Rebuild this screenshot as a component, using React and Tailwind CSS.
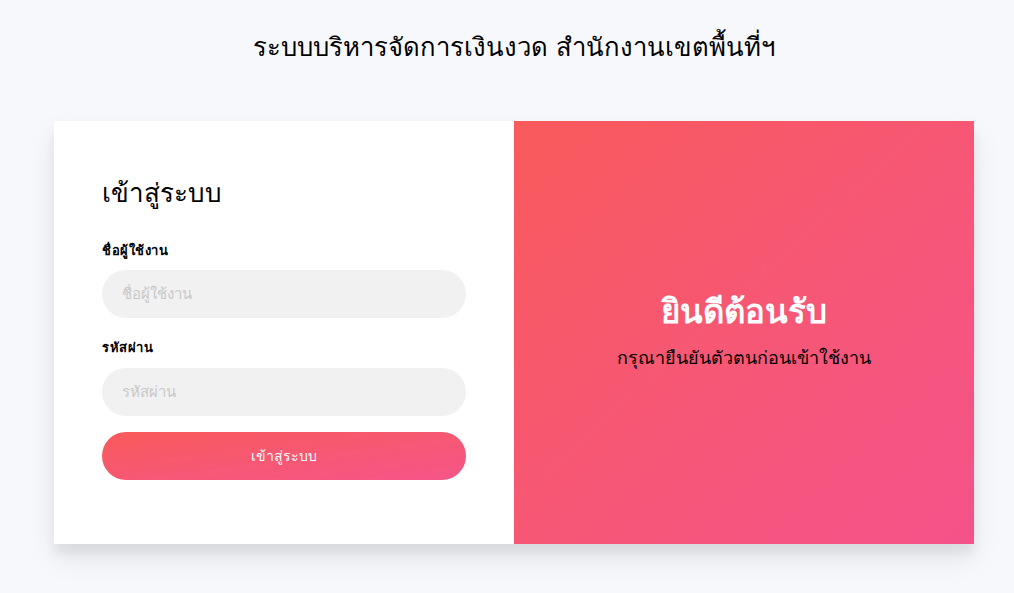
import React from "react";

const thai = "font-['DejaVu_Sans',sans-serif]";

const App = () => {
  return (
    <div className={`min-h-[593px] w-full bg-[#f7f8fc] flex flex-col items-center pl-[14px] ${thai}`}>
      <h1 className="mt-[29px] text-[25.7px] leading-[36px] text-black">
        ระบบบริหารจัดการเงินงวด สำนักงานเขตพื้นที่ฯ
      </h1>

      <div className="mt-[56px] w-[920px] h-[423px] flex bg-white shadow-[0_14px_28px_rgba(0,0,0,0.08),0_10px_10px_rgba(0,0,0,0.06)]">
        <div className="w-1/2 px-12 pt-[56px] flex flex-col">
          <h2 className="text-[26px] leading-[32px] text-black">เข้าสู่ระบบ</h2>

          <label className="mt-[33px] text-[13px] font-bold leading-[18px] tracking-[0.5px] text-black">
            ชื่อผู้ใช้งาน
          </label>
          <input
            type="text"
            placeholder="ชื่อผู้ใช้งาน"
            className="mt-[10px] h-12 w-full rounded-full bg-[#f1f1f1] px-5 text-[15px] outline-none placeholder:text-[#c8c8c8]"
          />

          <label className="mt-[21px] text-[13px] font-bold leading-[18px] tracking-[0.5px] text-black">
            รหัสผ่าน
          </label>
          <input
            type="password"
            placeholder="รหัสผ่าน"
            className="mt-[11px] h-12 w-full rounded-full bg-[#f1f1f1] px-5 text-[15px] outline-none placeholder:text-[#c8c8c8]"
          />

          <button className="mt-4 h-12 w-full rounded-full bg-gradient-to-br from-[#f95a5a] to-[#f45588] text-[14px] text-white">
            เข้าสู่ระบบ
          </button>
        </div>

        <div className="w-1/2 bg-gradient-to-br from-[#f95a5b] to-[#f4538a] flex flex-col items-center justify-center pb-[4px]">
          <p className="text-[33px] font-bold leading-[40px] text-white">ยินดีต้อนรับ</p>
          <p className="mt-[14px] text-[18px] leading-[24px] text-black">
            กรุณายืนยันตัวตนก่อนเข้าใช้งาน
          </p>
        </div>
      </div>
    </div>
  );
};

export default App;
